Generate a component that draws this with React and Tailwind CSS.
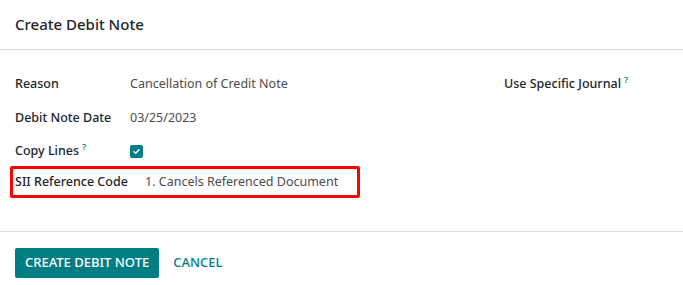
// App.jsx — Create Debit Note dialog

const ROWS = [
  { label: 'Reason', value: 'Cancellation of Credit Note' },
  { label: 'Debit Note Date', value: '03/25/2023' },
]

function Help() {
  return <span className="relative -top-[5px] ml-[3px] text-[9px] font-semibold text-[#0180a5]">?</span>
}

function CheckBox() {
  return (
    <span className="flex h-[13px] w-[13px] items-center justify-center rounded-[2px] bg-[#017e84]">
      <svg viewBox="0 0 10 10" className="h-[9px] w-[9px]">
        <path d="M2.2 5.2 L4.1 7 L7.8 3" fill="none" stroke="white" strokeWidth="1.6" strokeLinecap="round" strokeLinejoin="round" />
      </svg>
    </span>
  )
}

export default function App() {
  return (
    <div className="h-[285px] w-[683px] bg-white text-[12.5px] text-[#212529]" style={{ fontFamily: '"Noto Sans", sans-serif' }}>
      {/* header */}
      <div className="flex h-[50px] items-center border-b border-[#d8dadd] px-[15px]">
        <h4 className="text-[15px] font-medium">Create Debit Note</h4>
      </div>

      {/* body */}
      <div className="flex h-[182px] border-b border-[#d8dadd] px-[15px] pt-[17px]">
        <div className="w-[489px]">
          {ROWS.map(r => (
            <div key={r.label} className="flex h-[34px] items-center">
              <span className="w-[115px] font-medium">{r.label}</span>
              <span className="text-[#4c4c4c]">{r.value}</span>
            </div>
          ))}
          <div className="flex h-[32px] items-center">
            <span className="w-[115px] font-medium">Copy Lines<Help /></span>
            <CheckBox />
          </div>
          <div className="-ml-[5px] -mt-[1px] flex h-[32px] w-[350px] items-center rounded-[2px] border-[3px] border-[#ff0000] pl-[2px]">
            <span className="w-[130px] font-medium">SII Reference Code</span>
            <span className="text-[#4c4c4c]">1. Cancels Referenced Document</span>
          </div>
        </div>
        <div className="flex h-[34px] items-center">
          <span className="font-medium">Use Specific Journal<Help /></span>
        </div>
      </div>

      {/* footer */}
      <div className="flex items-center gap-[14px] px-[15px] pt-[16px]">
        <button className="h-[30px] rounded-[2px] bg-[#017e84] px-[10px] text-[13px] font-medium uppercase text-white">
          Create Debit Note
        </button>
        <button className="h-[30px] text-[13px] font-medium uppercase text-[#017e84]">Cancel</button>
      </div>
    </div>
  )
}
